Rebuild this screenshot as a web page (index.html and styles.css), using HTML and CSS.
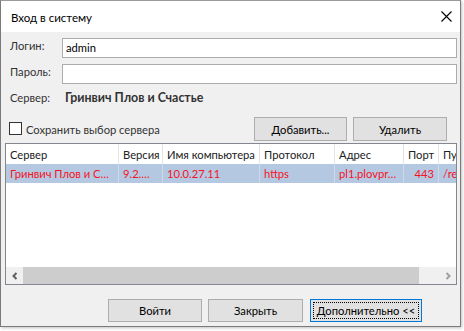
FILE: index.html
```html
<!DOCTYPE html>
<html>
<head>
<meta charset="utf-8">
<link rel="stylesheet" href="styles.css">
</head>
<body>
<div class="window">
  <div class="titlebar">
    <span class="title">Вход в систему</span>
    <svg class="close" width="11" height="11" viewBox="0 0 11 11"><path d="M0.5 0.5 L10.5 10.5 M10.5 0.5 L0.5 10.5" stroke="#000" stroke-width="1.1" fill="none"/></svg>
  </div>
  <div class="content">
    <div class="field-row first">
      <span class="label">Логин:</span>
      <div class="input">admin</div>
    </div>
    <div class="field-row">
      <span class="label">Пароль:</span>
      <div class="input"></div>
    </div>
    <div class="server-row">
      <span class="label">Сервер:</span>
      <span class="server-name">Гринвич Плов и Счастье</span>
    </div>
    <div class="action-row">
      <label class="check"><span class="box"></span>Сохранить выбор сервера</label>
      <div class="btn add">Добавить...</div>
      <div class="btn del">Удалить</div>
    </div>
    <div class="grid">
      <div class="grid-head">
        <div class="c c1">Сервер</div>
        <div class="c c2">Версия</div>
        <div class="c c3">Имя компьютера</div>
        <div class="c c4">Протокол</div>
        <div class="c c5">Адрес</div>
        <div class="c c6">Порт</div>
        <div class="c c7">Путь</div>
      </div>
      <div class="grid-row">
        <div class="c c1">Гринвич Плов и С…</div>
        <div class="c c2">9.2.…</div>
        <div class="c c3">10.0.27.11</div>
        <div class="c c4">https</div>
        <div class="c c5">pl1.plovpr…</div>
        <div class="c c6 num">443</div>
        <div class="c c7">/re</div>
      </div>
      <div class="grid-empty"></div>
      <div class="hscroll">
        <div class="arrow left"><svg width="8" height="8" viewBox="0 0 8 8"><path d="M5.5 1 L2.5 4 L5.5 7" stroke="#606060" stroke-width="2" fill="none"/></svg></div>
        <div class="thumb"></div>
        <div class="track"></div>
        <div class="arrow right"><svg width="8" height="8" viewBox="0 0 8 8"><path d="M2.5 1 L5.5 4 L2.5 7" stroke="#a0a0a0" stroke-width="2" fill="none"/></svg></div>
      </div>
    </div>
    <div class="bottom-row">
      <div class="btn b-login">Войти</div>
      <div class="btn b-close">Закрыть</div>
      <div class="btn b-more focused"><span class="focus">Дополнительно &lt;&lt;</span></div>
    </div>
  </div>
</div>
</body>
</html>
```

FILE: styles.css
```css
html, body {
  margin: 0;
  padding: 0;
  background: #ffffff;
}
body {
  font-family: "Lato", "Roboto", sans-serif;
  font-size: 11.2px;
  color: #1e1e1e;
  width: 464px;
  height: 331px;
  overflow: hidden;
  white-space: nowrap;
}
.window {
  box-sizing: border-box;
  width: 461px;
  height: 327px;
  border: 1px solid #7a7a7a;
  border-top-color: #9a9a9a;
  background: #f0f0f0;
  box-shadow: 1px 1px 3px rgba(0,0,0,0.25);
  display: flex;
  flex-direction: column;
}
.titlebar {
  height: 31px;
  background: #ffffff;
  display: flex;
  align-items: center;
  justify-content: space-between;
  padding: 0 8px 0 10px;
  flex: none;
}
.title {
  font-size: 11.5px;
  color: #000;
  position: relative;
  top: 1px;
}
.close {
  display: block;
}
.content {
  flex: 1;
  display: flex;
  flex-direction: column;
}
.field-row {
  display: flex;
  align-items: center;
  height: 20px;
  margin-top: 6px;
  margin-right: 3px;
}
.label {
  width: 52px;
  padding-left: 9px;
  color: #333;
  flex: none;
  position: relative;
  top: -3px;
}
.input {
  box-sizing: border-box;
  flex: 1;
  height: 20px;
  border: 1px solid #acacac;
  background: #fff;
  padding-left: 3px;
  line-height: 18px;
  color: #000;
}
.server-row {
  display: flex;
  align-items: center;
  height: 17px;
  margin-top: 5px;
}
.server-row .label {
  top: 0;
}
.server-name {
  font-weight: bold;
  font-size: 12.4px;
  color: #333;
  margin-left: 3px;
}
.action-row {
  display: flex;
  align-items: center;
  height: 24px;
  margin-top: 11px;
}
.check {
  display: flex;
  align-items: center;
  margin-left: 8px;
  color: #333;
  flex: 1;
}
.box {
  box-sizing: border-box;
  width: 13px;
  height: 13px;
  border: 1px solid #333;
  background: #fff;
  margin-right: 4px;
  position: relative;
  top: -1px;
}
.btn {
  box-sizing: border-box;
  border: 1px solid #adadad;
  background: #e1e1e1;
  display: flex;
  align-items: center;
  justify-content: center;
  color: #000;
}
.add {
  width: 93px;
  height: 24px;
  margin-right: 6px;
}
.del {
  width: 94px;
  height: 24px;
  margin-right: 13px;
}
.grid {
  box-sizing: border-box;
  margin: 2px 3px 0 4px;
  height: 142px;
  border: 1px solid #828790;
  background: #fff;
  display: flex;
  flex-direction: column;
  overflow: hidden;
}
.grid-head, .grid-row {
  display: flex;
  flex: none;
}
.grid-head {
  height: 20px;
}
.grid-row {
  height: 19px;
  background: #b4c8e2;
  color: #f5141e;
}
.c {
  box-sizing: border-box;
  flex: none;
  padding-left: 4px;
  border-right: 1px solid #e3e3e3;
  overflow: hidden;
  display: flex;
  align-items: center;
}
.grid-head .c {
  color: #222;
}
.grid-row .c {
  border-right-color: #cfd9e8;
}
.c1 { width: 113px; }
.c2 { width: 44px; }
.c3 { width: 97px; }
.c4 { width: 75px; }
.c5 { width: 69px; }
.c6 { width: 35px; }
.c7 { width: 60px; border-right: none; }
.num {
  justify-content: flex-end;
  padding-right: 4px;
}
.grid-empty {
  flex: 1;
}
.hscroll {
  height: 17px;
  display: flex;
  flex: none;
}
.arrow {
  width: 17px;
  background: #f0f0f0;
  display: flex;
  align-items: center;
  justify-content: center;
  flex: none;
}
.thumb {
  width: 396px;
  background: #cdcdcd;
  flex: none;
}
.track {
  flex: 1;
  background: #f0f0f0;
}
.bottom-row {
  display: flex;
  height: 23px;
  margin-top: 14px;
  padding-left: 107px;
}
.b-login { width: 94px; height: 23px; margin-right: 6px; }
.b-close { width: 95px; height: 23px; margin-right: 7px; }
.b-more {
  width: 112px;
  height: 23px;
  padding: 2px;
}
.focused {
  border-color: #0078d7;
}
.focus {
  box-sizing: border-box;
  width: 100%;
  height: 100%;
  border: 1px dotted #000;
  display: flex;
  align-items: center;
  justify-content: center;
}
```
